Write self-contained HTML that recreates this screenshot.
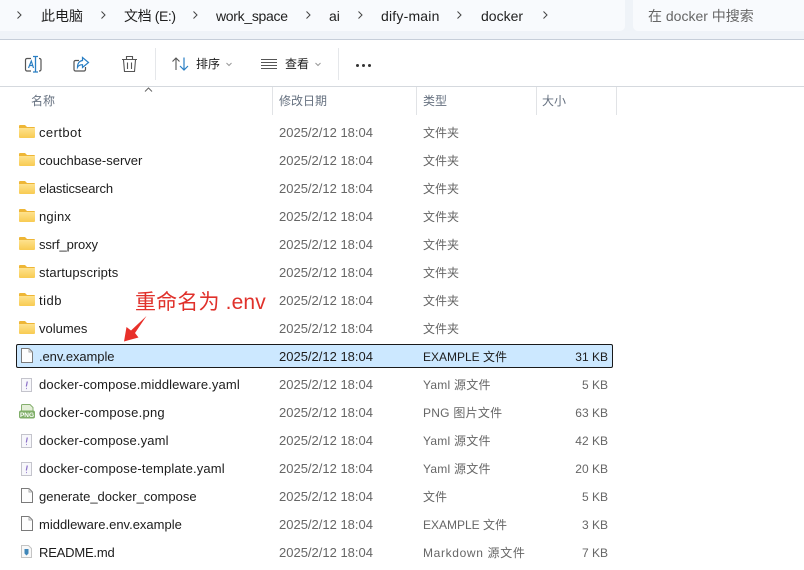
<!DOCTYPE html>
<html lang="zh"><head><meta charset="utf-8"><title>docker</title>
<style>
html,body{margin:0;padding:0;background:#fff}
#p{position:relative;width:804px;height:570px;overflow:hidden;background:#fff;font-family:"Liberation Sans","Noto Sans CJK SC",sans-serif;font-size:13px;color:#1c1c1c}
#p div{position:absolute;white-space:nowrap}
.t{line-height:18px;height:18px}
.g{color:#666}
.s{font-size:12px}
.h{color:#667180;font-size:12px;top:92px;line-height:18px}
.v{width:1px;background:#e1e3e6}
.c{font-size:14px;line-height:18px;top:7px;color:#1f1f1f}
svg{position:absolute;overflow:visible}
</style></head><body><div id="p">
<div style="left:0;top:0;width:804px;height:39px;background:#eff3f8"></div>
<div style="left:0;top:0;width:625px;height:31px;background:#f8fafd;border-radius:0 0 5px 0"></div>
<div style="left:633px;top:0;width:171px;height:31px;background:#f8fafd;border-radius:0 0 0 5px"></div>
<div style="left:0;top:39px;width:804px;height:1px;background:#c6ced9"></div>
<svg style="left:0;top:0" width="804" height="30" fill="none" stroke="#444" stroke-width="1"><path d="M17.500 11.500l3.500 3.500-3.500 3.500M101.500 11.500l3.500 3.500-3.500 3.500M193.500 11.500l3.500 3.500-3.500 3.500M306.500 11.500l3.500 3.500-3.500 3.500M358.500 11.500l3.500 3.500-3.500 3.500M457.500 11.500l3.500 3.500-3.500 3.500M543.500 11.500l3.500 3.500-3.500 3.500"/></svg>
<div class="c" style="left:41px">此电脑</div>
<div class="c" style="left:124px;letter-spacing:-.4px">文档 (E:)</div>
<div class="c" style="left:216px;letter-spacing:-.3px">work_space</div>
<div class="c" style="left:329px">ai</div>
<div class="c" style="left:381px;letter-spacing:.2px">dify-main</div>
<div class="c" style="left:481px">docker</div>
<div class="c" style="left:648px;color:#666">在 docker 中搜索</div>

<svg style="left:0;top:0" width="400" height="86" fill="none">
<path d="M31 58.500h-4a1.500 1.500 0 0 0-1.500 1.500v9.500a1.500 1.500 0 0 0 1.500 1.500h4M39 58.500h.5a1.500 1.500 0 0 1 1.500 1.500v9.500a1.500 1.500 0 0 1-1.500 1.500H39" stroke="#555" stroke-width="1.200"/>
<path d="M35.500 56.500v15.500M33 56.500h5M33 72h5" stroke="#2a7fc4" stroke-width="1.300"/>
<path d="M28.500 68l2.800-7 2.200 7M29.500 65.500h3.200" stroke="#2a7fc4" stroke-width="1.200"/>
<path d="M79 60.500h-3.500a1.500 1.500 0 0 0-1.500 1.500v7.500a1.500 1.500 0 0 0 1.500 1.500h8.500a1.500 1.500 0 0 0 1.500-1.500V67" stroke="#555" stroke-width="1.200"/>
<path d="M82.500 57.500l6 5-6 5v-2.800c-2.500 0-4 .8-5 2.600 0-3.800 1.800-6.400 5-6.800z" stroke="#2a7fc4" stroke-width="1.200"/>
<path d="M122 59.500h15M126.500 59v-2.500h6V59M123.500 60l1 11.500h10l1-11.500M127.500 62.500v6.500M131.500 62.500v6.500" stroke="#555" stroke-width="1.100"/>
<path d="M176 70V58M172.500 61.500l3.500-3.500 3.500 3.500" stroke="#555" stroke-width="1.100"/>
<path d="M184 57.500v12.500M180 66l4 4 4-4" stroke="#2a7fc4" stroke-width="1.200"/>
<path d="M226.500 63l2.500 2.500 2.500-2.500M315.500 63l2.500 2.500 2.500-2.500" stroke="#999"/>
<path d="M261 59.500h16M261 62.500h16M261 65.500h16M261 68.500h16" stroke="#555"/>
</svg>
<div class="t" style="left:196px;top:55px;font-size:12px">排序</div>
<div class="t" style="left:285px;top:55px;font-size:12px">查看</div>
<div style="left:155px;top:48px;width:1px;height:32px;background:#e5e7ea"></div>
<div style="left:338px;top:48px;width:1px;height:32px;background:#e5e7ea"></div>
<div style="left:356px;top:64px;width:3px;height:3px;border-radius:2px;background:#333"></div>
<div style="left:362px;top:64px;width:3px;height:3px;border-radius:2px;background:#333"></div>
<div style="left:368px;top:64px;width:3px;height:3px;border-radius:2px;background:#333"></div>

<div style="left:0;top:86px;width:804px;height:1px;background:#d5d9de"></div>
<svg style="left:0;top:85px" width="160" height="8" fill="none" stroke="#666"><path d="M145 6.500l3.500-3.500 3.500 3.500"/></svg>
<div class="h" style="left:31px">名称</div><div class="h" style="left:279px">修改日期</div><div class="h" style="left:423px">类型</div><div class="h" style="left:542px">大小</div>
<div class="v" style="left:272px;top:87px;height:28px"></div><div class="v" style="left:416px;top:87px;height:28px"></div><div class="v" style="left:536px;top:87px;height:28px"></div><div class="v" style="left:616px;top:87px;height:28px"></div>

<div style="left:16px;top:344px;width:595px;height:22px;background:#cce8ff;border:1px solid #1a1a1a;border-radius:2px"></div>

<svg width="0" height="0" style="left:0;top:0"><defs>
<linearGradient id="f" x1="0" y1="0" x2="0" y2="1"><stop offset="0" stop-color="#fee28e"/><stop offset="1" stop-color="#f8cb52"/></linearGradient>
<symbol id="fo" viewBox="0 0 16 13"><path d="M0 1a1 1 0 0 1 1-1h5l2 2h7a1 1 0 0 1 1 1v2H0z" fill="#eeb636"/><path d="M0 3h16V12a1 1 0 0 1-1 1H1a1 1 0 0 1-1-1z" fill="url(#f)"/></symbol>
<symbol id="fi" viewBox="0 0 12 15"><path d="M.5.500h7.500l3.500 3.500v10.500H.5z" fill="#fdfdfd" stroke="#7a7a7a"/><path d="M8 .500v3.500h3.500" fill="none" stroke="#aaa"/></symbol>
<symbol id="ya" viewBox="0 0 11 14"><path d="M.5.500h10v13H.5z" fill="#f7f7fb" stroke="#c4c4cc"/><path d="M6.300 3.500L5.300 8.500M5 10.500h.8" stroke="#8a6fc8" stroke-width="1.200" fill="none"/></symbol>
</defs></svg>

<!-- folders -->
<svg style="left:19px;top:125px" width="16" height="13"><use href="#fo"/></svg><div class="t" style="left:39px;top:124px;letter-spacing:.43px">certbot</div>
<svg style="left:19px;top:153px" width="16" height="13"><use href="#fo"/></svg><div class="t" style="left:39px;top:152px">couchbase-server</div>
<svg style="left:19px;top:181px" width="16" height="13"><use href="#fo"/></svg><div class="t" style="left:39px;top:180px;letter-spacing:-.15px">elasticsearch</div>
<svg style="left:19px;top:209px" width="16" height="13"><use href="#fo"/></svg><div class="t" style="left:39px;top:208px;letter-spacing:.2px">nginx</div>
<svg style="left:19px;top:237px" width="16" height="13"><use href="#fo"/></svg><div class="t" style="left:39px;top:236px;letter-spacing:-.1px">ssrf_proxy</div>
<svg style="left:19px;top:265px" width="16" height="13"><use href="#fo"/></svg><div class="t" style="left:39px;top:264px;letter-spacing:.15px">startupscripts</div>
<svg style="left:19px;top:293px" width="16" height="13"><use href="#fo"/></svg><div class="t" style="left:39px;top:292px;letter-spacing:.5px">tidb</div>
<svg style="left:19px;top:321px" width="16" height="13"><use href="#fo"/></svg><div class="t" style="left:39px;top:320px">volumes</div>
<!-- files -->
<svg style="left:21px;top:348px" width="12" height="15"><use href="#fi"/></svg><div class="t" style="left:39px;top:348px;letter-spacing:-.08px">.env.example</div>
<svg style="left:21px;top:378px" width="11" height="14"><use href="#ya"/></svg><div class="t" style="left:39px;top:376px;letter-spacing:.12px">docker-compose.middleware.yaml</div>
<svg style="left:19px;top:404px" width="16" height="15" viewBox="0 0 16 15"><path d="M2.500 8V1.500a1 1 0 0 1 1-1h7.500l3 3V8z" fill="#e4efd8" stroke="#86b06f"/><rect x="0" y="6.500" width="16" height="8" rx="2" fill="#7fae68"/><text x="8" y="13" font-family="Liberation Sans" font-size="6.500" font-weight="700" fill="#fff" text-anchor="middle">PNG</text></svg><div class="t" style="left:39px;top:404px;letter-spacing:.25px">docker-compose.png</div>
<svg style="left:21px;top:434px" width="11" height="14"><use href="#ya"/></svg><div class="t" style="left:39px;top:432px;letter-spacing:.13px">docker-compose.yaml</div>
<svg style="left:21px;top:462px" width="11" height="14"><use href="#ya"/></svg><div class="t" style="left:39px;top:460px;letter-spacing:.16px">docker-compose-template.yaml</div>
<svg style="left:21px;top:488px" width="12" height="15"><use href="#fi"/></svg><div class="t" style="left:39px;top:488px">generate_docker_compose</div>
<svg style="left:21px;top:516px" width="12" height="15"><use href="#fi"/></svg><div class="t" style="left:39px;top:516px">middleware.env.example</div>
<svg style="left:21px;top:545px" width="11" height="13" viewBox="0 0 11 13"><path d="M.5.500h7l3 3v9H.5z" fill="#f8f8f8" stroke="#c4c4c4"/><path d="M3.500 4h4v4.500L5.500 10.500 3.500 8.500z" fill="#3f86b8"/></svg><div class="t" style="left:39px;top:544px;letter-spacing:-.2px">README.md</div>

<!-- dates -->
<div class="t g" style="left:279px;top:124px">2025/2/12 18:04</div>
<div class="t g" style="left:279px;top:152px">2025/2/12 18:04</div>
<div class="t g" style="left:279px;top:180px">2025/2/12 18:04</div>
<div class="t g" style="left:279px;top:208px">2025/2/12 18:04</div>
<div class="t g" style="left:279px;top:236px">2025/2/12 18:04</div>
<div class="t g" style="left:279px;top:264px">2025/2/12 18:04</div>
<div class="t g" style="left:279px;top:292px">2025/2/12 18:04</div>
<div class="t g" style="left:279px;top:320px">2025/2/12 18:04</div>
<div class="t" style="left:279px;top:348px">2025/2/12 18:04</div>
<div class="t g" style="left:279px;top:376px">2025/2/12 18:04</div>
<div class="t g" style="left:279px;top:404px">2025/2/12 18:04</div>
<div class="t g" style="left:279px;top:432px">2025/2/12 18:04</div>
<div class="t g" style="left:279px;top:460px">2025/2/12 18:04</div>
<div class="t g" style="left:279px;top:488px">2025/2/12 18:04</div>
<div class="t g" style="left:279px;top:516px">2025/2/12 18:04</div>
<div class="t g" style="left:279px;top:544px">2025/2/12 18:04</div>

<!-- types -->
<div class="t g s" style="left:423px;top:124px">文件夹</div>
<div class="t g s" style="left:423px;top:152px">文件夹</div>
<div class="t g s" style="left:423px;top:180px">文件夹</div>
<div class="t g s" style="left:423px;top:208px">文件夹</div>
<div class="t g s" style="left:423px;top:236px">文件夹</div>
<div class="t g s" style="left:423px;top:264px">文件夹</div>
<div class="t g s" style="left:423px;top:292px">文件夹</div>
<div class="t g s" style="left:423px;top:320px">文件夹</div>
<div class="t s" style="left:423px;top:348px">EXAMPLE 文件</div>
<div class="t g s" style="left:423px;top:376px;letter-spacing:.25px">Yaml 源文件</div>
<div class="t g s" style="left:423px;top:404px;letter-spacing:.25px">PNG 图片文件</div>
<div class="t g s" style="left:423px;top:432px;letter-spacing:.25px">Yaml 源文件</div>
<div class="t g s" style="left:423px;top:460px;letter-spacing:.25px">Yaml 源文件</div>
<div class="t g s" style="left:423px;top:488px">文件</div>
<div class="t g s" style="left:423px;top:516px">EXAMPLE 文件</div>
<div class="t g s" style="left:423px;top:544px;letter-spacing:.65px">Markdown 源文件</div>

<!-- sizes -->
<div class="t s" style="right:196px;top:348px">31 KB</div>
<div class="t g s" style="right:196px;top:376px">5 KB</div>
<div class="t g s" style="right:196px;top:404px">63 KB</div>
<div class="t g s" style="right:196px;top:432px">42 KB</div>
<div class="t g s" style="right:196px;top:460px">20 KB</div>
<div class="t g s" style="right:196px;top:488px">5 KB</div>
<div class="t g s" style="right:196px;top:516px">3 KB</div>
<div class="t g s" style="right:196px;top:544px">7 KB</div>

<!-- annotation -->
<div style="left:135px;top:290px;font-size:21px;line-height:26px;letter-spacing:.15px;color:#e0312b">重命名为 .env</div>
<svg style="left:0;top:0" width="200" height="350"><path d="M146.500 316L135 333l3.500 4.500L124 341.500l2.500-14.500 4.500 3.500z" fill="#e8302a"/></svg>
</div></body></html>
